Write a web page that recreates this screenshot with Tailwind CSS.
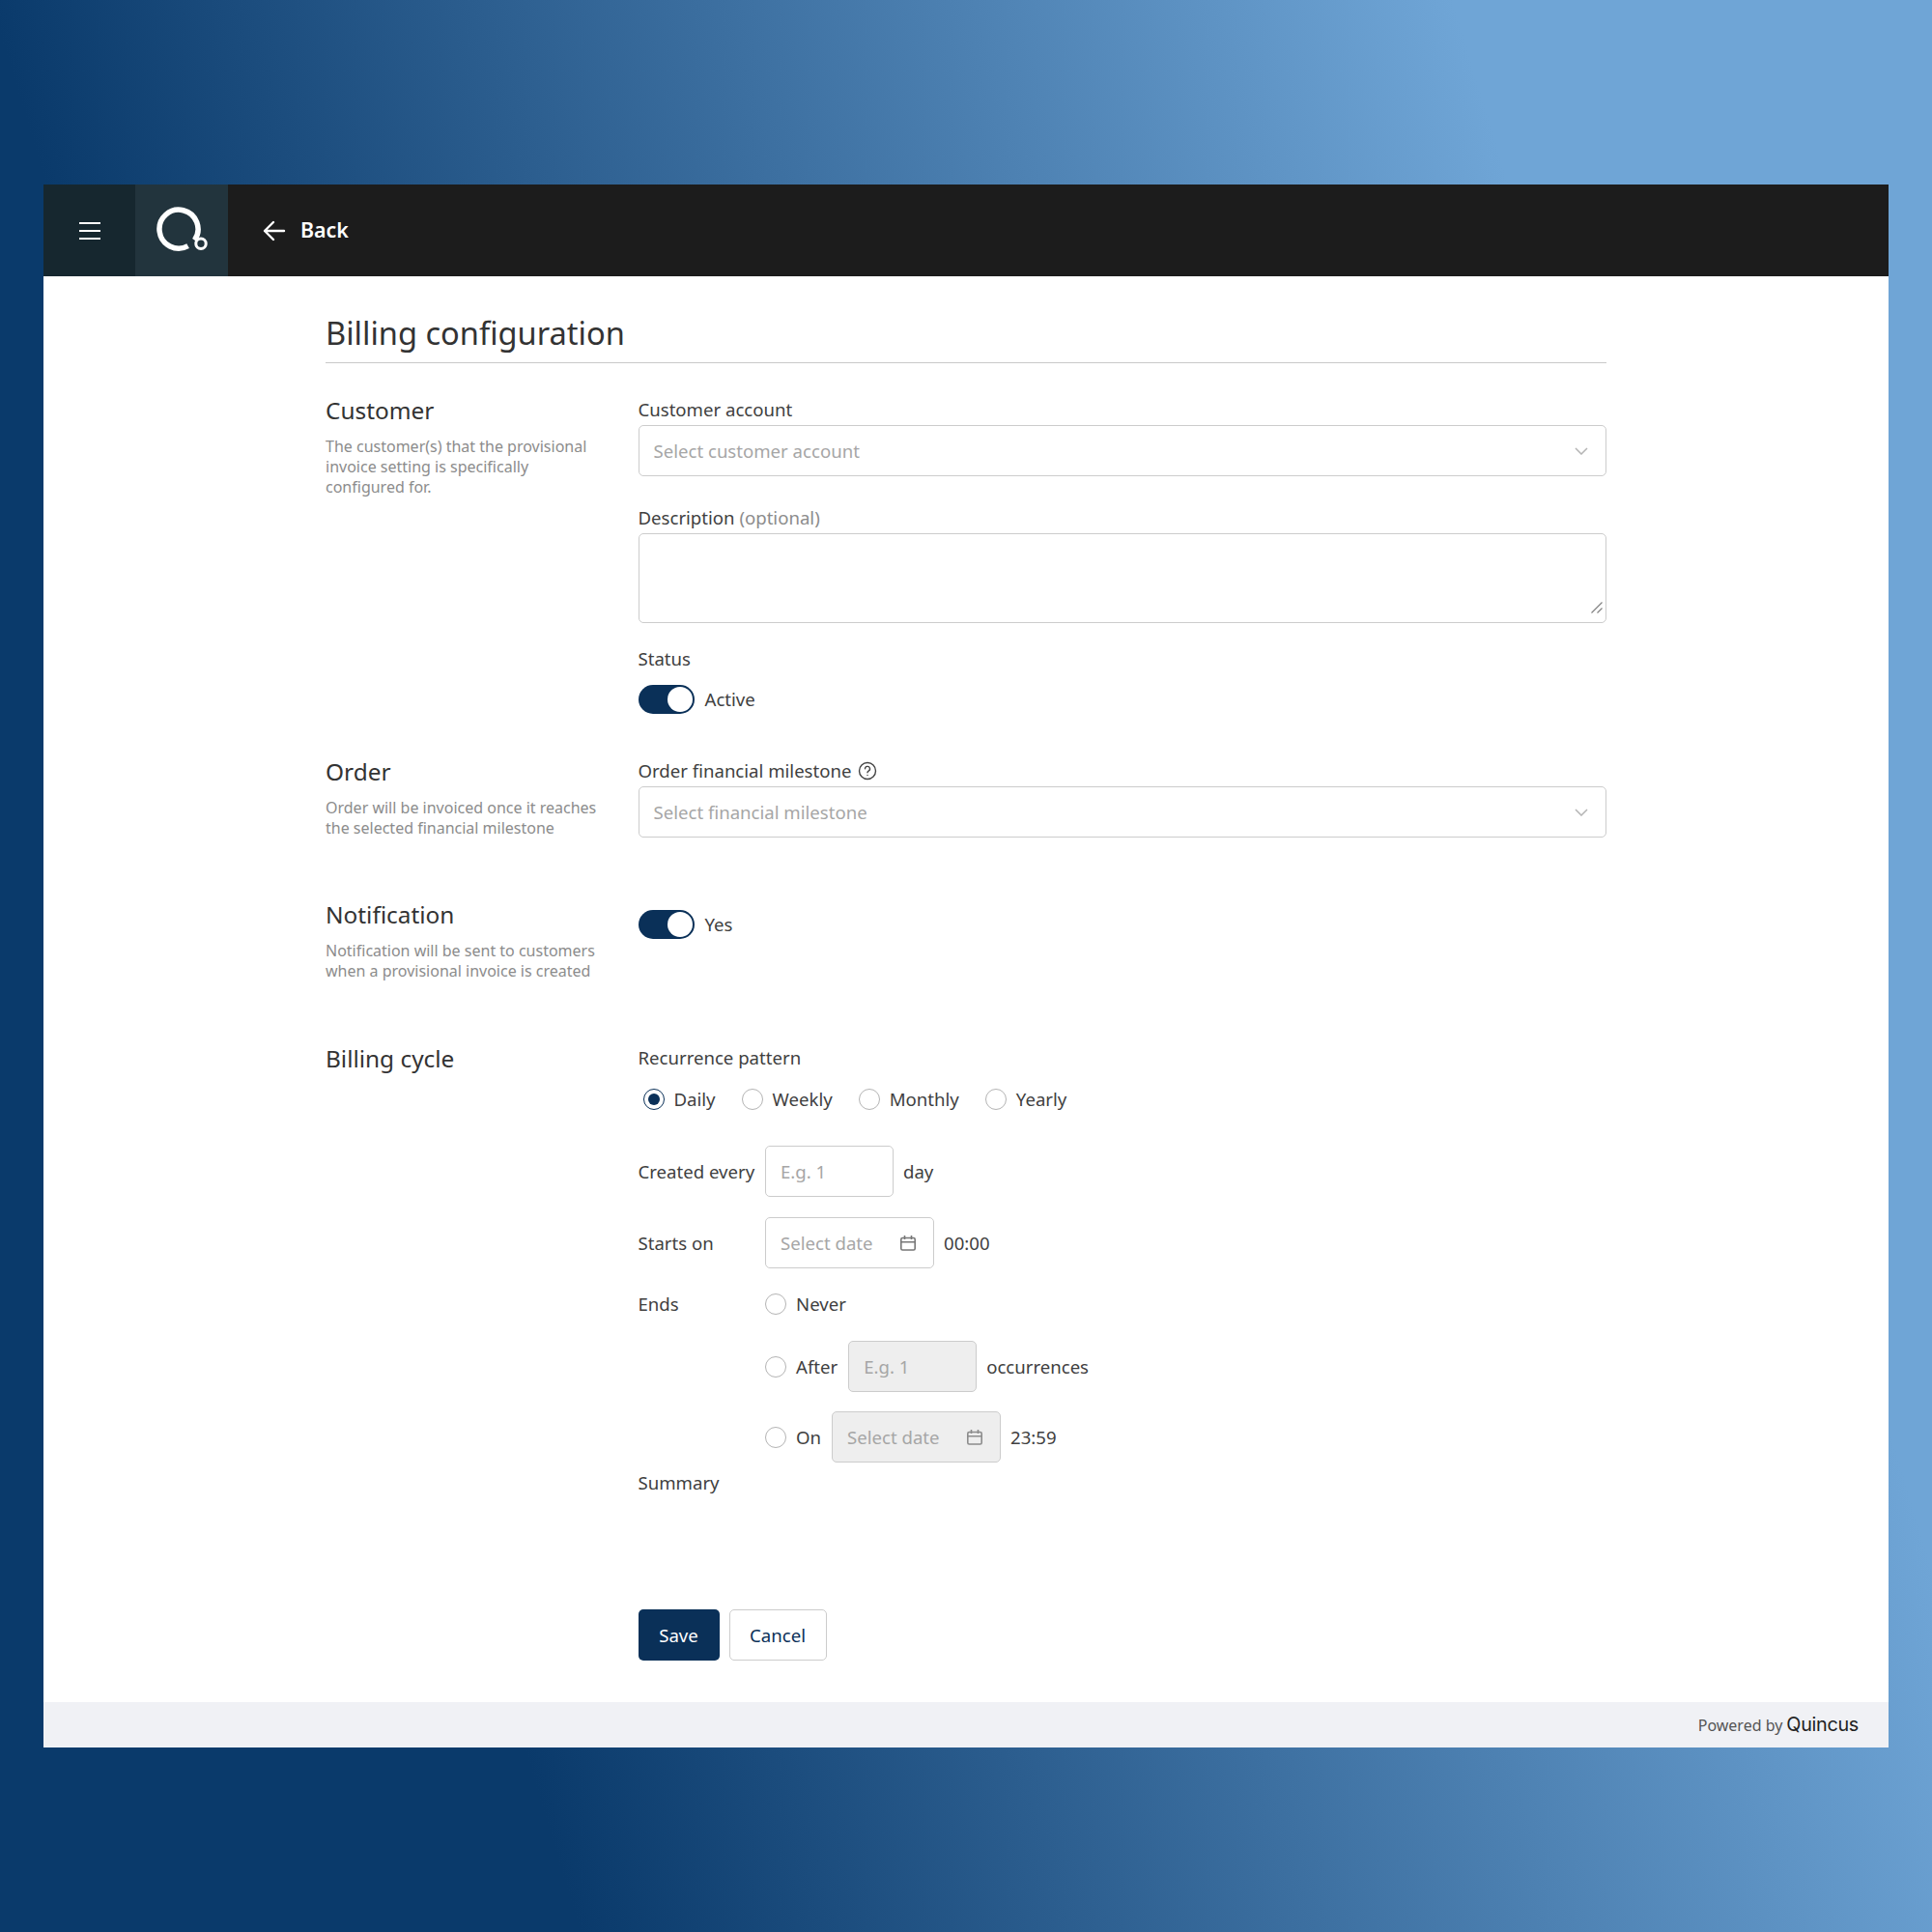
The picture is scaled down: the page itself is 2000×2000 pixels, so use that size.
<!DOCTYPE html>
<html lang="en">
<head>
<meta charset="UTF-8">
<title>Billing configuration</title>
<script src="https://cdn.jsdelivr.net/npm/@tailwindcss/browser@4"></script>
</head>
<body class="w-[2000px] h-[2000px] pt-[191px] pl-[45px] bg-[linear-gradient(73deg,#0a3a6b_23%,#6fa5d6_81%)] font-['Noto_Sans',sans-serif] text-[18.600px] text-[#404040]">
<div class="w-[1910px] h-[1618px] flex flex-col bg-white">

  <!-- top bar -->
  <header class="h-[95px] flex items-center bg-[#1c1c1c] text-white shrink-0">
    <div class="w-[95px] h-full flex items-center justify-center bg-[#16272f]">
      <svg width="22" height="18" viewBox="0 0 22 18" fill="none" stroke="#fff" stroke-width="2"><path d="M0 1h22M0 9h22M0 17h22"/></svg>
    </div>
    <div class="w-[96px] h-full flex items-center justify-center bg-[#22343d]">
      <svg width="96" height="95" viewBox="0 0 96 95" fill="none" stroke="#fff">
        <path d="M61.400 57.600 A20 20 0 1 0 54.600 63.700" stroke-width="5.500"/>
        <circle cx="68" cy="61.300" r="5.200" stroke-width="3"/>
      </svg>
    </div>
    <svg class="ml-[36px]" width="24" height="24" viewBox="0 0 24 24" fill="none" stroke="#fff" stroke-width="2.400" stroke-linecap="round" stroke-linejoin="round"><path d="M22 12H2M11 3l-9 9 9 9"/></svg>
    <span class="ml-[15px] text-[21.400px] font-semibold">Back</span>
  </header>

  <main class="flex-1 pl-[292px]">
    <div class="w-[1326px]">
      <h1 class="h-[90px] pt-[38px] border-b border-[#c9c9c9] text-[32.600px] leading-[42px] text-[#333]">Billing configuration</h1>

      <!-- customer -->
      <section class="grid grid-cols-[323.500px_1fr] mt-[32px]">
        <div>
          <h2 class="text-[24.400px] leading-[33px] text-[#333]">Customer</h2>
          <p class="mt-[11px] w-[290px] text-[16px] leading-[21px] text-[#8c8c8c]">The customer(s) that the provisional invoice setting is specifically configured for.</p>
        </div>
        <div>
          <div class="h-[32px] leading-[32px]">Customer account</div>
          <div class="h-[53px] flex items-center justify-between pl-[15px] pr-[18px] border-[1.500px] border-[#cccccc] rounded-[5px] text-[#a6a6a6]">
            <span>Select customer account</span>
            <svg width="14" height="8" viewBox="0 0 14 8" fill="none" stroke="#b4b4b4" stroke-width="1.500"><path d="M1 1l6 6 6-6"/></svg>
          </div>
          <div class="mt-[27px] h-[32px] leading-[32px]">Description <span class="text-[#8c8c8c]">(optional)</span></div>
          <div class="relative h-[93px]">
            <textarea class="block w-full h-full resize-none border-[1.500px] border-[#cccccc] rounded-[5px]"></textarea>
            <svg class="absolute right-[4px] bottom-[10px]" width="12" height="12" viewBox="0 0 12 12" fill="none" stroke="#808080" stroke-width="1.200"><path d="M0.500 11.500L11.500 0.500M6.500 11.500l5-5"/></svg>
          </div>
          <div class="mt-[21px] h-[32px] leading-[32px]">Status</div>
          <div class="mt-[11px] flex items-center h-[30px]">
            <div class="w-[58px] h-[30px] rounded-full bg-[#0a3058] flex items-center justify-end pr-[2px]"><div class="w-[26px] h-[26px] rounded-full bg-white"></div></div>
            <span class="ml-[11px]">Active</span>
          </div>
        </div>
      </section>

      <!-- order -->
      <section class="grid grid-cols-[323.500px_1fr] mt-[43px]">
        <div>
          <h2 class="text-[24.400px] leading-[33px] text-[#333]">Order</h2>
          <p class="mt-[11px] w-[290px] text-[16px] leading-[21px] text-[#8c8c8c]">Order will be invoiced once it reaches the selected financial milestone</p>
        </div>
        <div>
          <div class="h-[32px] flex items-center gap-[7px]">Order financial milestone
            <svg width="20" height="20" viewBox="0 0 20 20" fill="none" stroke="#444" stroke-width="1.400" stroke-linecap="round"><circle cx="10" cy="10" r="8.500"/><path d="M7.500 7.800a2.500 2.500 0 1 1 3.600 2.300c-.8.400-1.100.9-1.100 1.700"/><path d="M10 14.500v.1"/></svg>
          </div>
          <div class="h-[53px] flex items-center justify-between pl-[15px] pr-[18px] border-[1.500px] border-[#cccccc] rounded-[5px] text-[#a6a6a6]">
            <span>Select financial milestone</span>
            <svg width="14" height="8" viewBox="0 0 14 8" fill="none" stroke="#b4b4b4" stroke-width="1.500"><path d="M1 1l6 6 6-6"/></svg>
          </div>
        </div>
      </section>

      <!-- notification -->
      <section class="grid grid-cols-[323.500px_1fr] mt-[62px]">
        <div>
          <h2 class="text-[24.400px] leading-[33px] text-[#333]">Notification</h2>
          <p class="mt-[11px] w-[290px] text-[16px] leading-[21px] text-[#8c8c8c]">Notification will be sent to customers when a provisional invoice is created</p>
        </div>
        <div class="flex items-center h-[30px] mt-[12px]">
          <div class="w-[58px] h-[30px] rounded-full bg-[#0a3058] flex items-center justify-end pr-[2px]"><div class="w-[26px] h-[26px] rounded-full bg-white"></div></div>
          <span class="ml-[11px]">Yes</span>
        </div>
      </section>

      <!-- billing cycle -->
      <section class="grid grid-cols-[323.500px_1fr] mt-[63px]">
        <h2 class="text-[24.400px] leading-[33px] text-[#333]">Billing cycle</h2>
        <div>
          <div class="h-[32px] leading-[32px]">Recurrence pattern</div>
          <div class="mt-[11px] h-[32px] flex items-center pl-[5px]">
            <div class="w-[22px] h-[22px] rounded-full border-[1.500px] border-[#0a3058] flex items-center justify-center"><div class="w-[12px] h-[12px] rounded-full bg-[#0a3058]"></div></div>
            <span class="ml-[10px]">Daily</span>
            <div class="ml-[27px] w-[22px] h-[22px] rounded-full border-[1.500px] border-[#b4b4b4]"></div>
            <span class="ml-[10px]">Weekly</span>
            <div class="ml-[27px] w-[22px] h-[22px] rounded-full border-[1.500px] border-[#b4b4b4]"></div>
            <span class="ml-[10px]">Monthly</span>
            <div class="ml-[27px] w-[22px] h-[22px] rounded-full border-[1.500px] border-[#b4b4b4]"></div>
            <span class="ml-[10px]">Yearly</span>
          </div>
          <div class="mt-[32px] flex items-center">
            <span class="w-[131.500px]">Created every</span>
            <div class="w-[133px] h-[53px] flex items-center px-[15px] border-[1.500px] border-[#cccccc] rounded-[5px] text-[#a6a6a6]">E.g. 1</div>
            <span class="ml-[10px]">day</span>
          </div>
          <div class="mt-[21px] flex items-center">
            <span class="w-[131.500px]">Starts on</span>
            <div class="w-[175px] h-[53px] flex items-center justify-between pl-[15px] pr-[17px] border-[1.500px] border-[#cccccc] rounded-[5px] text-[#a6a6a6]">Select date
              <svg width="18" height="18" viewBox="0 0 18 18" fill="none" stroke="#777" stroke-width="1.600"><rect x="1.800" y="3.500" width="14.400" height="12.500" rx="1.500"/><path d="M1.800 7.800h14.400M5.500 1v4M12.500 1v4"/></svg>
            </div>
            <span class="ml-[10px]">00:00</span>
          </div>
          <div class="mt-[21px] flex items-center h-[32px]">
            <span class="w-[131.500px]">Ends</span>
            <div class="w-[22px] h-[22px] rounded-full border-[1.500px] border-[#b4b4b4]"></div>
            <span class="ml-[10px]">Never</span>
          </div>
          <div class="mt-[22px] flex items-center pl-[131.500px]">
            <div class="w-[22px] h-[22px] rounded-full border-[1.500px] border-[#b4b4b4]"></div>
            <span class="ml-[10px]">After</span>
            <div class="ml-[11px] w-[133px] h-[53px] flex items-center px-[15px] border-[1.500px] border-[#cccccc] rounded-[5px] bg-[#eeeeee] text-[#a6a6a6]">E.g. 1</div>
            <span class="ml-[10px]">occurrences</span>
          </div>
          <div class="mt-[20px] flex items-center pl-[131.500px]">
            <div class="w-[22px] h-[22px] rounded-full border-[1.500px] border-[#b4b4b4]"></div>
            <span class="ml-[10px]">On</span>
            <div class="ml-[11px] w-[175px] h-[53px] flex items-center justify-between pl-[15px] pr-[17px] border-[1.500px] border-[#cccccc] rounded-[5px] bg-[#eeeeee] text-[#a6a6a6]">Select date
              <svg width="18" height="18" viewBox="0 0 18 18" fill="none" stroke="#8c8c8c" stroke-width="1.600"><rect x="1.800" y="3.500" width="14.400" height="12.500" rx="1.500"/><path d="M1.800 7.800h14.400M5.500 1v4M12.500 1v4"/></svg>
            </div>
            <span class="ml-[10px]">23:59</span>
          </div>
          <div class="mt-[5px] h-[32px] leading-[32px]">Summary</div>
          <div class="mt-[115px] flex gap-[10px]">
            <div class="w-[84px] h-[53px] flex items-center justify-center rounded-[5px] bg-[#0a3058] text-white">Save</div>
            <div class="w-[101px] h-[53px] flex items-center justify-center rounded-[5px] border-[1.500px] border-[#cccccc] text-[#0a3058]">Cancel</div>
          </div>
        </div>
      </section>
    </div>
  </main>

  <footer class="h-[47px] flex items-center justify-end pr-[31px] bg-[#f0f1f5] shrink-0">
    <span class="text-[16px] text-[#555]">Powered by</span>
    <span class="ml-[4px] text-[19.800px] font-['Inter',sans-serif] text-[#222] tracking-[-0.300px]">Quincus</span>
  </footer>
</div>
</body>
</html>
